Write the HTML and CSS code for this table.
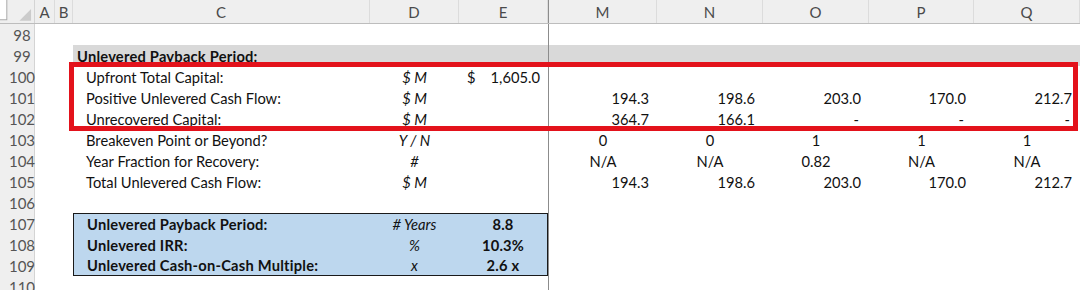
FILE: index.html
```html
<!DOCTYPE html>
<html>
<head>
<meta charset="utf-8">
<link rel="stylesheet" href="styles.css">
</head>
<body>
<div class="sheet">
  <div class="row head">
    <div class="rh corner"><svg width="35" height="23" viewBox="0 0 35 23"><rect x="-1" y="-1" width="8" height="21" fill="#fff" stroke="#a9a9a9"/><polygon points="32,9 32,21 20,21" fill="#cbcbcb"/></svg></div>
    <div class="ch">A</div><div class="ch">B</div><div class="ch">C</div><div class="ch">D</div><div class="ch">E</div>
    <div class="ch fz">M</div><div class="ch">N</div><div class="ch">O</div><div class="ch">P</div><div class="ch">Q</div>
  </div>

  <div class="row"><div class="rh">98</div><div></div><div></div><div></div><div></div><div></div><div class="fz"></div><div></div><div></div><div></div><div></div></div>

  <div class="row band"><div class="rh">99</div><div></div><div></div>
    <div class="c g b title">Unlevered Payback Period:</div><div class="c g"></div><div class="c g"></div><div class="c g fz"></div><div class="c g"></div><div class="c g"></div><div class="c g"></div><div class="c g"></div></div>

  <div class="row"><div class="rh">100</div><div></div><div></div>
    <div class="c ind">Upfront Total Capital:</div><div class="c ctr i">$ M</div><div class="c acct"><span>$</span><span>1,605.0</span></div>
    <div class="c fz"></div><div class="c"></div><div class="c"></div><div class="c"></div><div class="c"></div></div>

  <div class="row"><div class="rh">101</div><div></div><div></div>
    <div class="c ind">Positive Unlevered Cash Flow:</div><div class="c ctr i">$ M</div><div class="c"></div>
    <div class="c num fz">194.3</div><div class="c num">198.6</div><div class="c num">203.0</div><div class="c num">170.0</div><div class="c num">212.7</div></div>

  <div class="row"><div class="rh">102</div><div></div><div></div>
    <div class="c ind">Unrecovered Capital:</div><div class="c ctr i">$ M</div><div class="c"></div>
    <div class="c num fz">364.7</div><div class="c num">166.1</div><div class="c num dash">-</div><div class="c num dash">-</div><div class="c num dash">-</div></div>

  <div class="row"><div class="rh">103</div><div></div><div></div>
    <div class="c ind">Breakeven Point or Beyond?</div><div class="c ctr i">Y / N</div><div class="c"></div>
    <div class="c ctr fz">0</div><div class="c ctr">0</div><div class="c ctr">1</div><div class="c ctr">1</div><div class="c ctr">1</div></div>

  <div class="row"><div class="rh">104</div><div></div><div></div>
    <div class="c ind">Year Fraction for Recovery:</div><div class="c ctr i">#</div><div class="c"></div>
    <div class="c ctr fz">N/A</div><div class="c ctr">N/A</div><div class="c ctr">0.82</div><div class="c ctr">N/A</div><div class="c ctr">N/A</div></div>

  <div class="row"><div class="rh">105</div><div></div><div></div>
    <div class="c ind">Total Unlevered Cash Flow:</div><div class="c ctr i">$ M</div><div class="c"></div>
    <div class="c num fz">194.3</div><div class="c num">198.6</div><div class="c num">203.0</div><div class="c num">170.0</div><div class="c num">212.7</div></div>

  <div class="row"><div class="rh">106</div><div></div><div></div><div></div><div></div><div></div><div class="fz"></div><div></div><div></div><div></div><div></div></div>

  <div class="row"><div class="rh">107</div><div></div><div></div>
    <div class="c ind b blue bt bl">Unlevered Payback Period:</div><div class="c ctr i blue bt"># Years</div><div class="c ctr b blue bt br">8.8</div>
    <div class="c fz"></div><div class="c"></div><div class="c"></div><div class="c"></div><div class="c"></div></div>

  <div class="row"><div class="rh">108</div><div></div><div></div>
    <div class="c ind b blue bl">Unlevered IRR:</div><div class="c ctr i blue">%</div><div class="c ctr b blue br">10.3%</div>
    <div class="c fz"></div><div class="c"></div><div class="c"></div><div class="c"></div><div class="c"></div></div>

  <div class="row"><div class="rh">109</div><div></div><div></div>
    <div class="c ind b blue bl bb">Unlevered Cash-on-Cash Multiple:</div><div class="c ctr i blue bb">x</div><div class="c ctr b blue br bb">2.6 x</div>
    <div class="c fz"></div><div class="c"></div><div class="c"></div><div class="c"></div><div class="c"></div></div>

  <div class="row"><div class="rh">110</div><div></div><div></div><div></div><div></div><div></div><div class="fz"></div><div></div><div></div><div></div><div></div></div>

  <div class="callout"></div>
</div>
</body>
</html>
```

FILE: styles.css
```css
html, body {
  margin: 0;
  padding: 0;
  background: #ffffff;
}

.sheet {
  position: relative;
  width: 1080px;
  height: 290px;
  overflow: hidden;
  font-family: Lato, "Liberation Sans", sans-serif;
  font-size: 14.7px;
  color: #111;
}

.row {
  display: grid;
  grid-template-columns: 35px 20px 18px 297px 89px 89px 109px 106px 106px 105px 106px;
  height: 21px;
}

.row > div {
  box-sizing: border-box;
  min-width: 0;
}

.head {
  height: 24px;
  background: #efefef;
  border-bottom: 1px solid #bdbdbd;
  box-sizing: border-box;
}

.ch {
  display: flex;
  align-items: center;
  justify-content: center;
  color: #4a4a4a;
  font-size: 15px;
  padding-top: 1px;
  border-right: 1px solid #dcdcdc;
}

.corner {
  display: block;
}

.corner svg {
  display: block;
}

.rh {
  background: #efefef;
  border-right: 1px solid #d4d4d4;
  color: #555;
  font-size: 15px;
  display: flex;
  align-items: center;
  justify-content: center;
  padding-left: 10px;
  padding-top: 1px;
}

.head .rh {
  padding: 0;
}

.fz {
  border-left: 1px solid #8c8c8c;
}

.c {
  display: flex;
  align-items: center;
  padding: 0 8px 0 8px;
  white-space: nowrap;
}

.g {
  background: #d9d9d9;
}

.b {
  font-weight: 700;
  letter-spacing: 0.22px;
}

.i {
  font-style: italic;
}

.title {
  padding-left: 4px;
}

.ind {
  padding-left: 13px;
}

.ctr {
  justify-content: center;
}

.num {
  justify-content: flex-end;
}

.dash {
  padding-right: 10px;
}

.acct {
  justify-content: space-between;
}

.blue {
  background: #bdd7ee;
}

.bt { border-top: 1px solid #1a1a1a; }
.bb { border-bottom: 1px solid #1a1a1a; }
.bl { border-left: 1px solid #1a1a1a; }
.br { border-right: 1px solid #1a1a1a; }

.callout {
  position: absolute;
  left: 69px;
  top: 62px;
  width: 1009px;
  height: 69px;
  box-sizing: border-box;
  border: 5px solid #e3121b;
  pointer-events: none;
}
```
